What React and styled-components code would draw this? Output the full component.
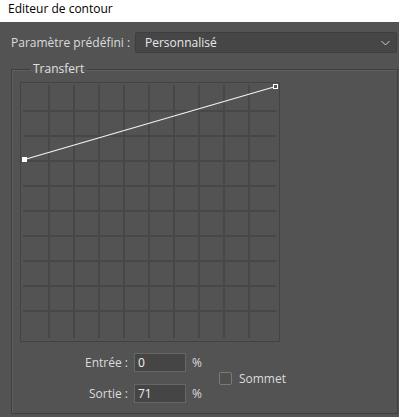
import React from 'react';
import styled, { createGlobalStyle } from 'styled-components';

const GlobalStyle = createGlobalStyle`
  html, body { margin: 0; padding: 0; background: #535353; }
  body { font-family: "Open Sans", "Noto Sans", "Liberation Sans", sans-serif; font-size: 12px; }
`;

const Window = styled.div`
  width: 399px;
  height: 417px;
  background: #535353;
  display: flex;
  flex-direction: column;
  overflow: hidden;
`;

const TitleBar = styled.div`
  height: 22px;
  background: #ffffff;
  color: #000;
  padding-left: 8px;
  line-height: 18px;
  font-size: 12px;
`;

const Content = styled.div`
  flex: 1;
  display: flex;
  flex-direction: column;
  padding: 10px 1px 3px 11px;
`;

const PresetRow = styled.div`
  display: flex;
  align-items: center;
  height: 21px;
`;

const Label = styled.span`
  color: #dcdcdc;
  white-space: nowrap;
`;

const PresetLabel = styled(Label)`
  width: 124px;
`;

const Select = styled.div`
  flex: 1;
  height: 19px;
  margin-right: 1px;
  display: flex;
  align-items: center;
  justify-content: space-between;
  padding: 0 6px 0 9px;
  background: #464646;
  border: 1px solid #3e3e3e;
  border-radius: 2px;
  color: #e8e8e8;
`;

const GroupBox = styled.fieldset`
  margin: 9px 0 0 0;
  padding: 6px 0 10px 8px;
  border: 1px solid #3f3f3f;
  box-shadow: 1px 1px 0 #5e5e5e inset;
  flex: 1;
  min-width: 0;
`;

const Legend = styled.legend`
  margin-left: 10px;
  padding: 0 3px;
  color: #e0e0e0;
  line-height: 14px;
`;

const Controls = styled.div`
  display: flex;
  align-items: center;
  margin-top: 11px;
`;

const Fields = styled.div`
  display: grid;
  grid-template-columns: 108px 52px auto;
  column-gap: 6px;
  row-gap: 12px;
  align-items: center;
`;

const FieldLabel = styled(Label)`
  text-align: right;
`;

const NumInput = styled.div`
  height: 17px;
  line-height: 17px;
  background: #454545;
  border: 1px solid #666666;
  padding-left: 3px;
  color: #f0f0f0;
`;

const Percent = styled(Label)``;

const CheckWrap = styled.label`
  display: flex;
  align-items: center;
  gap: 7px;
  margin-left: 17px;
  margin-top: 1px;
`;

const CheckBox = styled.span`
  width: 11px;
  height: 11px;
  border: 1px solid #7a7a7a;
  border-radius: 2px;
  background: #505050;
`;

function Curve() {
  const ticks = [1, 2, 3, 4, 5, 6, 7, 8, 9].map((k) => 4 + 25 * k);
  return (
    <svg width="260" height="260" style={{ display: 'block' }}>
      <rect x="0.5" y="0.5" width="259" height="259" fill="none" stroke="#434343" />
      {ticks.map((t) => (
        <g key={t} stroke="#474747" strokeWidth="2">
          <line x1="3" y1={t} x2="256" y2={t} />
          <line x1={t} y1="3" x2={t} y2="256" />
        </g>
      ))}
      <line x1="4.5" y1="77.5" x2="255.5" y2="4.5" stroke="#f2f2f2" strokeWidth="1.3" />
      <rect x="2" y="75" width="5" height="5" fill="#ffffff" />
      <rect x="253.5" y="2.5" width="4" height="4" fill="#535353" stroke="#ffffff" />
    </svg>
  );
}

export default function App() {
  return (
    <Window>
      <GlobalStyle />
      <TitleBar>Editeur de contour</TitleBar>
      <Content>
        <PresetRow>
          <PresetLabel>Paramètre prédéfini :</PresetLabel>
          <Select>
            <span>Personnalisé</span>
            <svg width="9" height="6" viewBox="0 0 9 6">
              <path d="M0.5 1 L4.5 5 L8.5 1" fill="none" stroke="#cfcfcf" strokeWidth="1" />
            </svg>
          </Select>
        </PresetRow>
        <GroupBox>
          <Legend>Transfert</Legend>
          <Curve />
          <Controls>
            <Fields>
              <FieldLabel>Entrée :</FieldLabel>
              <NumInput>0</NumInput>
              <Percent>%</Percent>
              <FieldLabel>Sortie :</FieldLabel>
              <NumInput>71</NumInput>
              <Percent>%</Percent>
            </Fields>
            <CheckWrap>
              <CheckBox />
              <Label>Sommet</Label>
            </CheckWrap>
          </Controls>
        </GroupBox>
      </Content>
    </Window>
  );
}
